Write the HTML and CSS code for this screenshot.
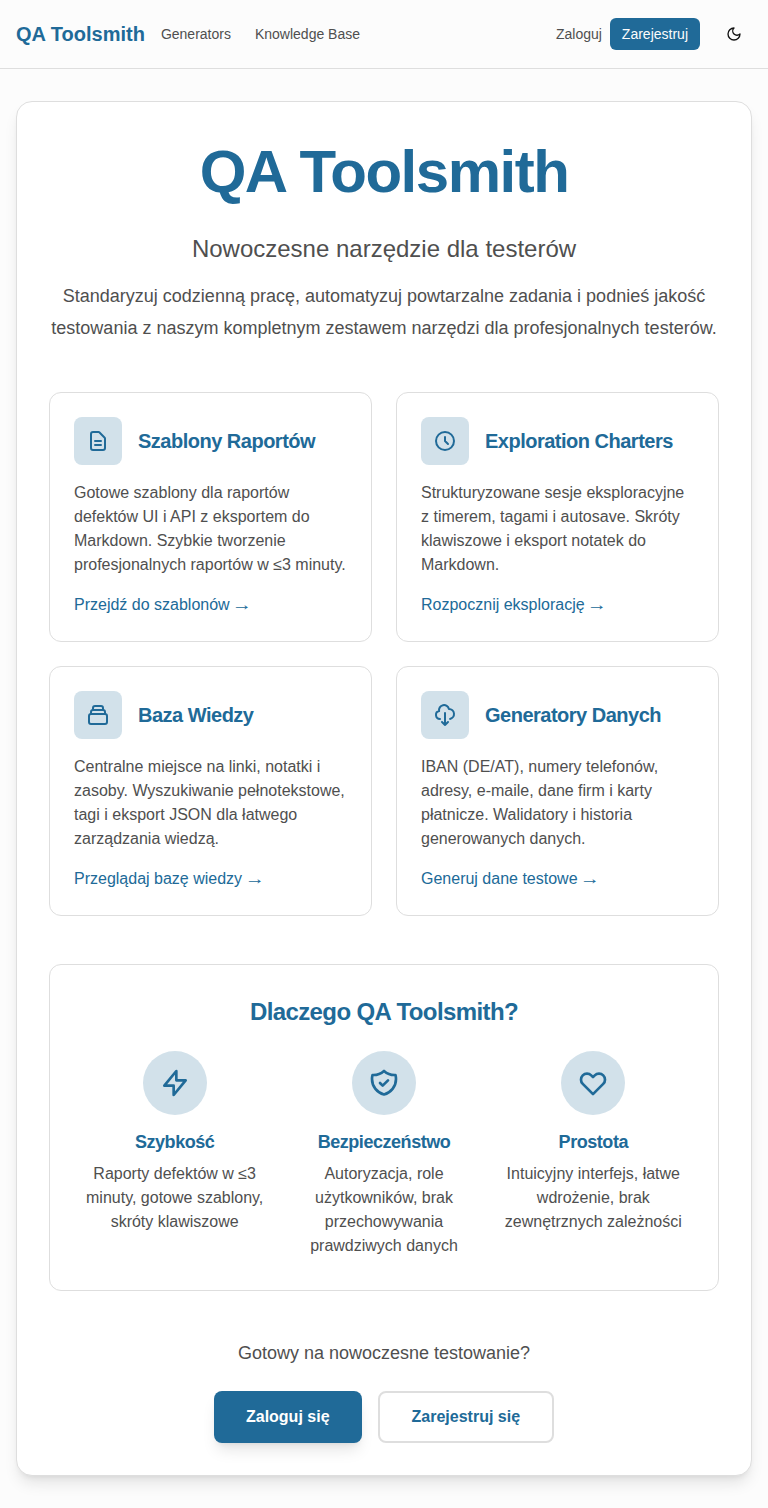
FILE: index.html
```html
<!DOCTYPE html>
<html lang="pl">
<head>
<meta charset="utf-8">
<title>QA Toolsmith</title>
<link rel="stylesheet" href="styles.css">
</head>
<body>
<header class="topbar">
  <a class="brand">QA Toolsmith</a>
  <nav class="nav"><a>Generators</a><a>Knowledge Base</a></nav>
  <div class="actions">
    <a class="login">Zaloguj</a>
    <a class="register">Zarejestruj</a>
    <button class="theme" aria-label="Motyw"><svg viewBox="0 0 24 24"><path d="M12 3a6 6 0 0 0 9 9 9 9 0 1 1-9-9Z"/></svg></button>
  </div>
</header>
<main class="panel">
  <section class="hero">
    <h1>QA Toolsmith</h1>
    <p class="tagline">Nowoczesne narzędzie dla testerów</p>
    <p class="lead">Standaryzuj codzienną pracę, automatyzuj powtarzalne zadania i podnieś jakość testowania z naszym kompletnym zestawem narzędzi dla profesjonalnych testerów.</p>
  </section>
  <section class="cards">
    <article class="card">
      <div class="card-head"><span class="tile"><svg viewBox="0 0 24 24"><path d="M9 12h6m-6 4h6m2 5H7a2 2 0 01-2-2V5a2 2 0 012-2h5.586a1 1 0 01.707.293l5.414 5.414a1 1 0 01.293.707V19a2 2 0 01-2 2z"/></svg></span><h2>Szablony Raportów</h2></div>
      <p>Gotowe szablony dla raportów defektów UI i API z eksportem do Markdown. Szybkie tworzenie profesjonalnych raportów w ≤3 minuty.</p>
      <a>Przejdź do szablonów <span class="arrow">→</span></a>
    </article>
    <article class="card">
      <div class="card-head"><span class="tile"><svg viewBox="0 0 24 24"><path d="M12 8v4l3 3m6-3a9 9 0 11-18 0 9 9 0 0118 0z"/></svg></span><h2>Exploration Charters</h2></div>
      <p>Strukturyzowane sesje eksploracyjne z timerem, tagami i autosave. Skróty klawiszowe i eksport notatek do Markdown.</p>
      <a>Rozpocznij eksplorację <span class="arrow">→</span></a>
    </article>
    <article class="card">
      <div class="card-head"><span class="tile"><svg viewBox="0 0 24 24"><path d="M19 11H5m14 0a2 2 0 012 2v6a2 2 0 01-2 2H5a2 2 0 01-2-2v-6a2 2 0 012-2m14 0V9a2 2 0 00-2-2M5 11V9a2 2 0 012-2m0 0V5a2 2 0 012-2h6a2 2 0 012 2v2M7 7h10"/></svg></span><h2>Baza Wiedzy</h2></div>
      <p>Centralne miejsce na linki, notatki i zasoby. Wyszukiwanie pełnotekstowe, tagi i eksport JSON dla łatwego zarządzania wiedzą.</p>
      <a>Przeglądaj bazę wiedzy <span class="arrow">→</span></a>
    </article>
    <article class="card">
      <div class="card-head"><span class="tile"><svg viewBox="0 0 24 24"><path d="M7 16a4 4 0 01-.88-7.903A5 5 0 1115.9 6L16 6a5 5 0 011 9.9M9 19l3 3m0 0l3-3m-3 3V10"/></svg></span><h2>Generatory Danych</h2></div>
      <p>IBAN (DE/AT), numery telefonów, adresy, e-maile, dane firm i karty płatnicze. Walidatory i historia generowanych danych.</p>
      <a>Generuj dane testowe <span class="arrow">→</span></a>
    </article>
  </section>
  <section class="why">
    <h2>Dlaczego QA Toolsmith?</h2>
    <div class="features">
      <div class="feature"><span class="disc"><svg viewBox="0 0 24 24"><path d="M13 10V3L4 14h7v7l9-11h-7z"/></svg></span><h3>Szybkość</h3><p>Raporty defektów w ≤3 minuty, gotowe szablony, skróty klawiszowe</p></div>
      <div class="feature"><span class="disc"><svg viewBox="0 0 24 24"><path d="M9 12l2 2 4-4m5.618-4.016A11.955 11.955 0 0112 2.944a11.955 11.955 0 01-8.618 3.04A12.02 12.02 0 003 9c0 5.591 3.824 10.29 9 11.622 5.176-1.332 9-6.03 9-11.622 0-1.042-.133-2.052-.382-3.016z"/></svg></span><h3>Bezpieczeństwo</h3><p>Autoryzacja, role użytkowników, brak przechowywania prawdziwych danych</p></div>
      <div class="feature"><span class="disc"><svg viewBox="0 0 24 24"><path d="M4.318 6.318a4.5 4.5 0 000 6.364L12 20.364l7.682-7.682a4.5 4.5 0 00-6.364-6.364L12 7.636l-1.318-1.318a4.5 4.5 0 00-6.364 0z"/></svg></span><h3>Prostota</h3><p>Intuicyjny interfejs, łatwe wdrożenie, brak zewnętrznych zależności</p></div>
    </div>
  </section>
  <section class="cta">
    <p>Gotowy na nowoczesne testowanie?</p>
    <div class="buttons"><a class="btn primary">Zaloguj się</a><a class="btn outline">Zarejestruj się</a></div>
  </section>
</main>
</body>
</html>
```
FILE: styles.css
```css
* { box-sizing: border-box; margin: 0; padding: 0; }
body { background: #fcfcfc; color: #4f4f4f; font: 16px/24px Arial, "Liberation Sans", sans-serif; }
svg { display: block; width: 24px; height: 24px; fill: none; stroke: currentColor; stroke-width: 2; stroke-linecap: round; stroke-linejoin: round; }
h1, h2, h3 { color: #206a98; font-weight: 700; letter-spacing: -0.025em; }
.topbar { height: 69px; border-bottom: 1px solid #dedede; padding: 0 16px; display: flex; align-items: center; font-size: 14px; line-height: 20px; }
.brand { color: #206a98; font-size: 20px; line-height: 28px; font-weight: 700; margin-right: 16px; }
.nav { display: flex; gap: 24px; }
.actions { margin-left: auto; display: flex; align-items: center; gap: 8px; }
.register { background: #206a98; color: #fcfcfc; border-radius: 6px; padding: 6px 12px; }
.theme { width: 36px; height: 36px; margin-left: 8px; border: 0; background: none; color: #111; display: flex; align-items: center; justify-content: center; }
.theme svg { width: 16px; height: 16px; }
.panel { margin: 32px 16px; padding: 32px; background: #fff; border: 1px solid #dedede; border-radius: 16px; box-shadow: 0 10px 15px -3px rgba(0,0,0,.1), 0 4px 6px -4px rgba(0,0,0,.1); }
.hero { text-align: center; }
.hero h1 { font-size: 60px; line-height: 75px; margin-bottom: 24px; }
.tagline { font-size: 24px; line-height: 32px; margin-bottom: 15px; }
.lead { font-size: 18px; line-height: 32px; }
.cards { display: grid; grid-template-columns: 1fr 1fr; gap: 24px; margin-top: 48px; }
.card { border: 1px solid #dedede; border-radius: 12px; padding: 24px; height: 250px; }
.card-head { display: flex; align-items: center; gap: 16px; margin-bottom: 16px; }
.card h2 { font-size: 20px; line-height: 28px; }
.tile { width: 48px; height: 48px; border-radius: 8px; background: #d2e1ea; color: #206a98; display: flex; align-items: center; justify-content: center; }
.card p { margin-bottom: 16px; }
.card a { color: #206a98; }
.arrow { display: inline-block; transform: scaleX(1.25); }
.why { margin-top: 48px; border: 1px solid #dedede; border-radius: 12px; padding: 32px; text-align: center; }
.why h2 { font-size: 24px; line-height: 30px; margin-bottom: 24px; }
.features { display: grid; grid-template-columns: repeat(3, 1fr); gap: 24px; }
.disc { width: 64px; height: 64px; border-radius: 50%; background: #d2e1ea; color: #206a98; display: flex; align-items: center; justify-content: center; margin: 0 auto 16px; }
.disc svg { width: 32px; height: 32px; }
.feature h3 { font-size: 18px; line-height: 22.5px; margin-bottom: 8px; }
.cta { margin-top: 48px; text-align: center; }
.cta p { font-size: 18px; line-height: 28px; margin-bottom: 24px; }
.buttons { display: flex; justify-content: center; gap: 16px; }
.btn { height: 52px; padding: 0 32px; display: flex; align-items: center; border-radius: 8px; font-weight: 700; }
.primary { background: #206a98; color: #fff; box-shadow: 0 10px 15px -3px rgba(0,0,0,.1), 0 4px 6px -4px rgba(0,0,0,.1); }
.outline { border: 2px solid #dedede; color: #206a98; }
```
